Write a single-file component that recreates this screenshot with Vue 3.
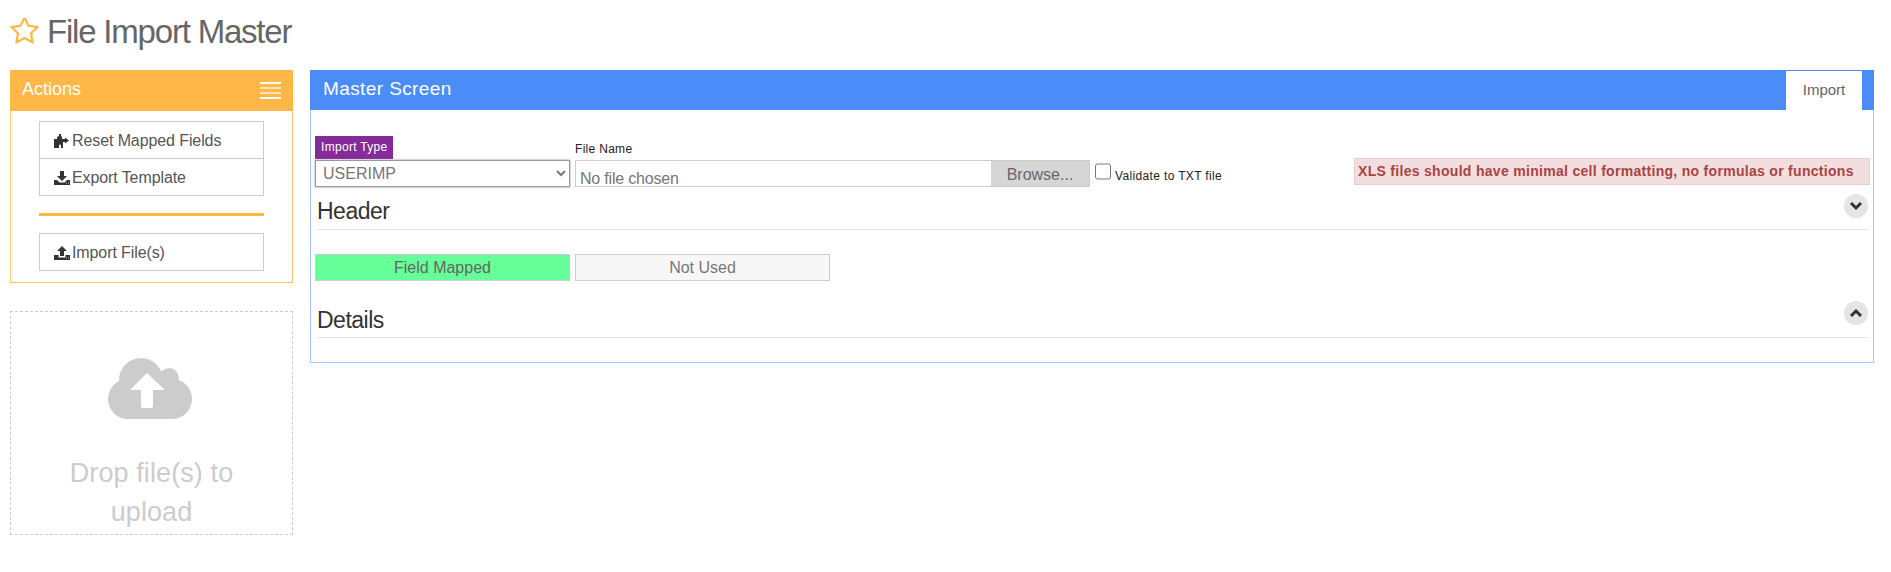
<script setup>
</script>

<template>
  <div class="page">
    <h1 class="title">
      <svg class="star" viewBox="0 0 1664 1600" aria-hidden="true">
        <path fill="#ffb848" d="M1137 1004l306-297-422-62-189-382-189 382-422 62 306 297-73 421 378-199 377 199zm527-357q0 22-26 48l-363 354 86 500q1 7 1 20 0 50-41 50-19 0-40-12l-449-236-449 236q-22 12-40 12-21 0-31.5-14.5t-10.5-35.5q0-6 2-20l86-500-364-354q-25-27-25-48 0-37 56-46l502-73 225-455q19-41 49-41t49 41l225 455 502 73q56 9 56 46z" transform="translate(0 -150)"/>
      </svg>
      <span>File Import Master</span>
    </h1>
    <div class="columns">
      <aside class="side">
        <section class="actions">
          <header class="actions-head">
            <span>Actions</span>
            <span class="bars"><i></i><i></i><i></i><i></i></span>
          </header>
          <div class="actions-body">
            <div class="btn-stack">
              <button class="act">
                <svg class="ico" viewBox="0 0 16 14"><path fill="#333" d="M5 0h2v2l1 1v2h3V3.500l4 3-4 3V8H9v6H7v-2.500a1 1 0 0 0-2 0V14H0V5h3V3l2-1z"/></svg>
                Reset Mapped Fields
              </button>
              <button class="act joined">
                <svg class="ico" viewBox="0 0 16 14"><path fill="#333" d="M6 0h4v5h3l-5 5-5-5h3zM0 9h3l2.500 2.500h5L13 9h3v5H0z"/><path fill="#bbb" d="M12 11.500h1v1h-1zM14 11.500h1v1h-1z"/></svg>
                Export Template
              </button>
            </div>
            <div class="rule"></div>
            <button class="act">
              <svg class="ico" viewBox="0 0 16 14"><path fill="#333" d="M8 0l5 5h-3v5H6V5H3zM0 9h4.500v2.500h7V9H16v5H0z"/><path fill="#bbb" d="M12 11.500h1v1h-1zM14 11.500h1v1h-1z"/></svg>
              Import File(s)
            </button>
          </div>
        </section>
        <section class="drop">
          <svg class="cloud" viewBox="0 0 84 61" aria-hidden="true">
            <g fill="#ccc">
              <circle cx="20" cy="41" r="20"/>
              <circle cx="33" cy="22" r="22"/>
              <circle cx="61" cy="20" r="10"/>
              <circle cx="64" cy="41" r="20"/>
              <rect x="20" y="25" width="44" height="36"/>
            </g>
            <path fill="#fff" d="M39 15l18 17H45v16q0 2-2 2h-8q-2 0-2-2V32H22z"/>
          </svg>
          <p class="drop-text">Drop file(s) to upload</p>
        </section>
      </aside>

      <main class="master">
        <header class="master-head">
          <span class="master-title">Master Screen</span>
          <span class="tab">Import</span>
        </header>
        <div class="master-body">
          <div class="form-row">
            <div class="cell">
              <span class="badge">Import Type</span>
              <select class="type">
                <option>USERIMP</option>
              </select>
            </div>
            <div class="cell file-cell">
              <span class="file-label">File Name</span>
              <div class="file">
                <span class="file-name">No file chosen</span>
                <span class="browse">Browse...</span>
              </div>
            </div>
            <label class="validate">
              <input type="checkbox" />
              <span>Validate to TXT file</span>
            </label>
            <div class="alert">XLS files should have minimal cell formatting, no formulas or functions</div>
          </div>

          <div class="section-head first">
            <h2>Header</h2>
            <span class="round">
              <svg viewBox="0 0 14 10"><path d="M2 2l5 5 5-5" fill="none" stroke="#333" stroke-width="3"/></svg>
            </span>
          </div>
          <div class="legend">
            <div class="chip mapped">Field Mapped</div>
            <div class="chip unused">Not Used</div>
          </div>
          <div class="section-head second">
            <h2>Details</h2>
            <span class="round">
              <svg viewBox="0 0 14 10"><path d="M2 8l5-5 5 5" fill="none" stroke="#333" stroke-width="3"/></svg>
            </span>
          </div>
        </div>
      </main>
    </div>
  </div>
</template>

<style scoped>
* { box-sizing: border-box; }
.page {
  width: 1891px;
  height: 572px;
  padding: 0 0 0 10px;
  overflow: hidden;
  background: #fff;
  font-family: "Liberation Sans", Arial, sans-serif;
  color: #333;
}
.title {
  display: flex;
  align-items: center;
  gap: 8px;
  height: 70px;
  margin: 0;
  padding-bottom: 6px;
  font-size: 33px;
  font-weight: 400;
  letter-spacing: -1.2px;
  color: #666;
}
.star { width: 29px; height: 28px; }
.columns { display: flex; gap: 17px; align-items: flex-start; }
.side { width: 283px; flex: none; }
.actions { border: 1px solid #ffc766; border-top: 0; }
.actions-head {
  display: flex;
  justify-content: space-between;
  align-items: center;
  height: 41px;
  margin: 0 -1px;
  padding: 0 12px 2px 12px;
  background: #ffb848;
  color: #fff;
  font-size: 18px;
}
.bars { display: flex; flex-direction: column; gap: 3px; width: 21px; margin-top: 2px; }
.bars i { display: block; height: 2px; background: #fff; }
.bars i:nth-child(2), .bars i:nth-child(3) { background: #ffe3b5; }
.actions-body { padding: 10px 28px 11px; }
.btn-stack { display: flex; flex-direction: column; }
.act {
  display: flex;
  align-items: center;
  gap: 2px;
  width: 100%;
  height: 38px;
  padding: 1px 14px 0;
  background: #fff;
  border: 1px solid #ccc;
  font: 16px "Liberation Sans", Arial, sans-serif;
  letter-spacing: -0.1px;
  color: #555;
}
.joined { margin-top: -1px; }
.ico { width: 16px; height: 14px; flex: none; }
.rule { height: 3px; margin: 17px 0; background: #ffb848; }
.drop {
  display: flex;
  flex-direction: column;
  align-items: center;
  height: 224px;
  margin-top: 28px;
  padding-top: 46px;
  border: 1px dashed #ccc;
}
.cloud { width: 84px; height: 61px; margin-left: -3px; }
.drop-text {
  margin: 35px 0 0;
  width: 200px;
  text-align: center;
  font-size: 27px;
  letter-spacing: 0.1px;
  line-height: 39px;
  color: #ccc;
}
.master {
  width: 1564px;
  height: 293px;
  flex: none;
  border: 1px solid #a9c9fb;
  border-top: 0;
}
.master-head {
  display: flex;
  justify-content: space-between;
  align-items: flex-end;
  height: 40px;
  margin: 0 -1px;
  padding-right: 12px;
  background: #4b8df8;
}
.master-title {
  align-self: center;
  padding-left: 13px;
  padding-bottom: 2px;
  font-size: 19px;
  letter-spacing: 0.4px;
  color: #fff;
}
.tab {
  display: flex;
  align-items: center;
  justify-content: center;
  width: 76px;
  height: 39px;
  padding-bottom: 3px;
  background: #fff;
  font-size: 15px;
  color: #666;
}
.master-body { padding: 0 5px 0 4px; }
.form-row { position: relative; display: flex; height: 78px; padding-top: 26px; }
.cell { display: flex; flex-direction: column; width: 255px; flex: none; }
.badge {
  align-self: flex-start;
  height: 23px;
  line-height: 23px;
  padding: 0 6px;
  background: #852b99;
  color: #fff;
  font-size: 12px;
  letter-spacing: 0.3px;
}
.type {
  width: 255px;
  height: 27px;
  margin-top: 1px;
  padding: 0 3px;
  background: #fff;
  border: 1px solid #999;
  box-shadow: 0 0 2px #888;
  font: 16px "Liberation Sans", Arial, sans-serif;
  color: #777;
}
.file-cell { width: 515px; margin-left: 5px; }
.file-label {
  height: 24px;
  line-height: 27px;
  font-size: 12px;
  letter-spacing: 0.3px;
  color: #222;
}
.file {
  display: flex;
  justify-content: space-between;
  height: 27px;
  border: 1px solid #ccc;
}
.file-name {
  padding: 9px 0 0 4px;
  font-size: 16px;
  line-height: 18px;
  letter-spacing: -0.2px;
  color: #777;
}
.browse {
  width: 98px;
  line-height: 27px;
  text-align: center;
  background: #d6d6d6;
  font-size: 16px;
  color: #666;
}
.validate {
  display: flex;
  align-items: flex-end;
  gap: 4px;
  margin-left: 5px;
  height: 27px;
  margin-top: 24px;
  font-size: 12px;
  letter-spacing: 0.35px;
  color: #222;
}
.validate input {
  width: 16px;
  height: 17px;
  margin: 0 0 7px;
}
.validate span { line-height: 14px; padding-bottom: 4px; }
.alert {
  position: absolute;
  left: 1039px;
  top: 48px;
  width: 516px;
  height: 27px;
  padding-left: 3px;
  line-height: 24px;
  background: #f2dede;
  border: 1px solid #ebccd1;
  color: #a94442;
  font-size: 14px;
  letter-spacing: 0.3px;
  font-weight: 700;
  white-space: nowrap;
}
.section-head {
  display: flex;
  justify-content: space-between;
  margin-left: 2px;
  border-bottom: 1px solid #e5e5e5;
}
.section-head.first { height: 42px; padding-top: 8px; }
.section-head.second { height: 37px; padding-top: 4px; }
.section-head h2 {
  margin: 0;
  font-size: 23px;
  font-weight: 400;
  letter-spacing: -0.5px;
  line-height: 30px;
  color: #333;
}
.round {
  display: flex;
  align-items: center;
  justify-content: center;
  width: 24px;
  height: 24px;
  border-radius: 50%;
  background: #e5e5e5;
}
.first .round { margin-top: -2px; }
.second .round { margin-top: -4px; }
.round svg { width: 14px; height: 10px; }
.legend { display: flex; gap: 5px; margin: 24px 0 20px; }
.chip {
  width: 255px;
  height: 27px;
  line-height: 26px;
  text-align: center;
  font-size: 16px;
  border: 1px solid #ccc;
  color: #777;
}
.mapped { background: #66ff99; color: #666; }
.unused { background: #f7f7f7; }
</style>
